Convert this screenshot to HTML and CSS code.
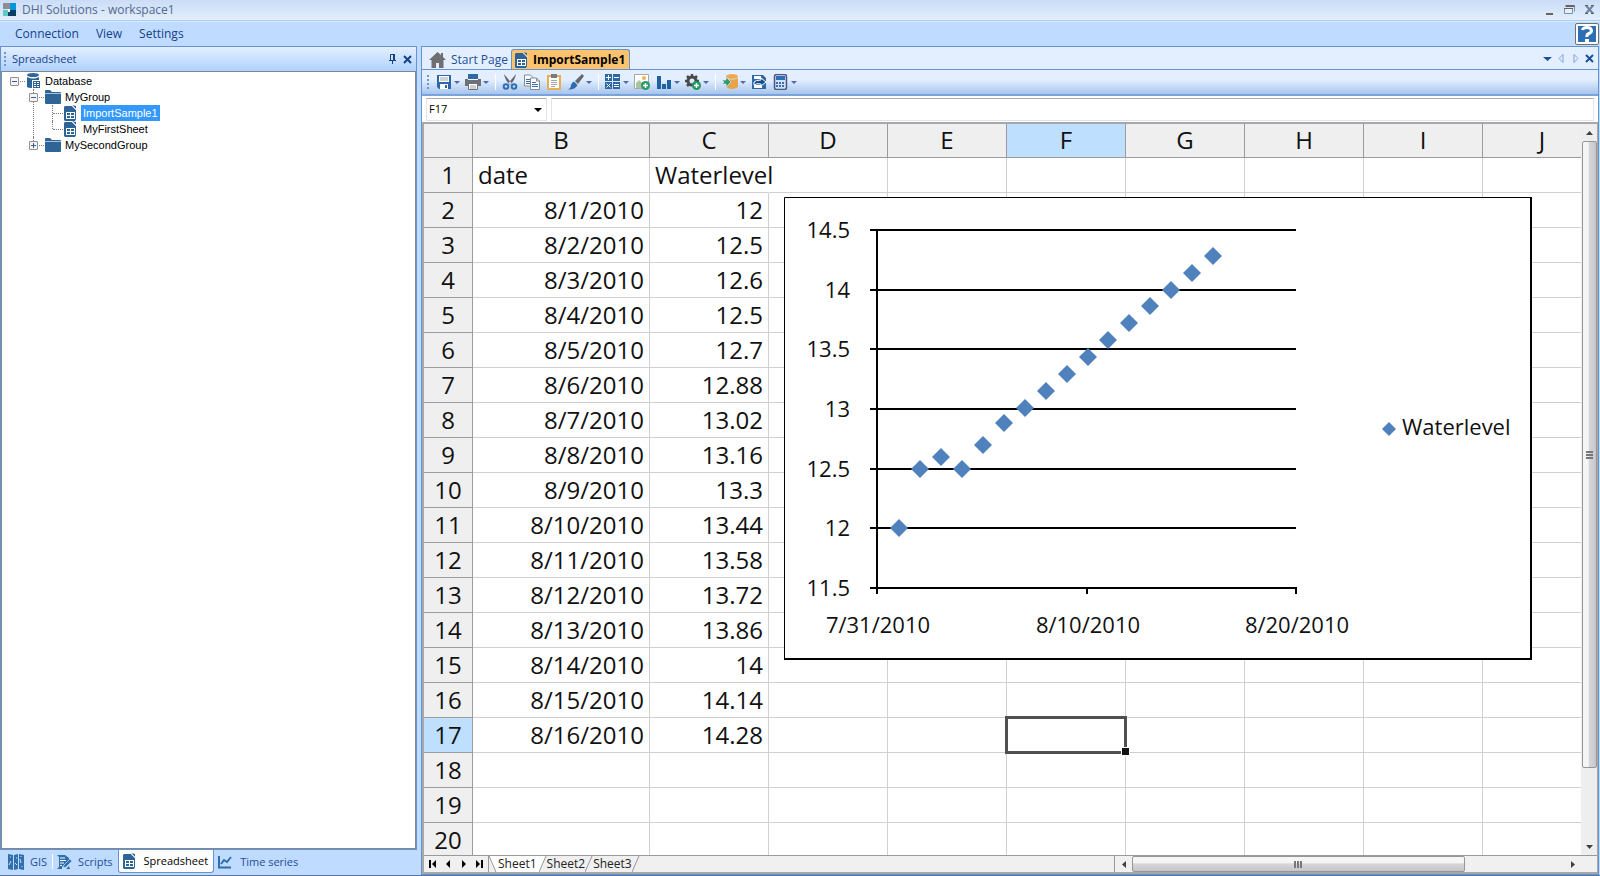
FILE: index.html
```html
<!DOCTYPE html>
<html lang="en">
<head>
<meta charset="utf-8">
<title>DHI Solutions - workspace1</title>
<link rel="stylesheet" href="styles.css">
</head>
<body>
<svg class="defs" aria-hidden="true">
  <symbol id="i-sheet" viewBox="0 0 14 16"><path d="M1 2l1-1h7l4 4v9l-1 2H2l-1-1z" fill="#2f6496"/><path d="M9 0l4 4V1z" fill="#2f6496"/><path d="M9 0v1l4 4h1z" fill="#fff"/><path d="M3 7h9v7H3z" fill="#fff"/><path d="M4 8h3v2H4zM8 8h3v2H8zM4 11h3v2H4zM8 11h3v2H8z" fill="#2f6496"/></symbol>
  <symbol id="i-folder" viewBox="0 0 16 14"><path d="M0 1q0-1 1-1h4l2 2h8q1 0 1 1v10q0 1-1 1H1q-1 0-1-1z" fill="#2f6496"/><path d="M0 3.500h16" stroke="#fff" stroke-opacity=".6"/></symbol>
</svg>
<div class="app">
  <header class="titlebar">
    <svg width="13" height="13" viewBox="0 0 13 13"><path d="M0 0h7v6H0z" fill="#8b8f92"/><path d="M7 0h6v7H7z" fill="#0098db"/><path d="M0 7h7v6H0z" fill="#61c9c3"/><path d="M5 7h8v6H5z" fill="#0b3f66"/><path d="M5 6h2v3H5z" fill="#fff"/></svg>
    <h1>DHI Solutions - workspace1</h1>
    <div class="window-buttons">
      <button aria-label="Minimize"><svg width="11" height="11"><path d="M2 9h7v2H2z" fill="#65635e"/></svg></button>
      <button aria-label="Restore"><svg width="11" height="11"><path d="M2 1.500h8.500v6" fill="none" stroke="#7791b9"/><path d="M1.500 2h9" stroke="#65635e" stroke-width="2"/><path d="M.5 4.500h8v5h-8z" fill="#e5effd" stroke="#7791b9"/><path d="M0 4.500h9" stroke="#65635e"/></svg></button>
      <button aria-label="Close"><svg width="11" height="11"><path d="M2 1.500l7 8M9 1.500l-7 8" stroke="#7080a0" stroke-width="2"/><path d="M1 1.500h3M7 1.500h3M1 9.500h3M7 9.500h3" stroke="#65635e"/></svg></button>
    </div>
  </header>
  <nav class="menubar">
    <a href="#">Connection</a><a href="#">View</a><a href="#">Settings</a>
    <button class="help" aria-label="Help"><svg width="18" height="16" viewBox="0 0 18 16"><path d="M0 0h18v16H0z" fill="#2e6fb3"/><path d="M4.500 4q.5-2.500 4.500-2.500T13.500 4.500Q13.500 6.500 11 7.500T9 11" fill="none" stroke="#fff" stroke-width="3"/><path d="M7 13h4v3H7z" fill="#fff"/></svg></button>
  </nav>
  <div class="body">
    <aside class="side">
      <section class="panel">
        <div class="panel-head">
          <span class="grip"></span>
          <h2>Spreadsheet</h2>
          <button aria-label="Pin"><svg width="9" height="10"><path d="M2.500 6V.5h3M6 0v6M1 6.500h7M4.500 6v4" fill="none" stroke="#15428b"/><path d="M5 0h2v6H5z" fill="#15428b"/></svg></button>
          <button aria-label="Close panel"><svg width="9" height="9"><path d="M1 1l7 7M8 1L1 8" stroke="#15428b" stroke-width="2"/></svg></button>
        </div>
        <div class="tree">
          <ul>
            <li>
              <div class="row"><button class="toggle open" aria-label="Collapse Database"></button><svg width="15" height="16" viewBox="0 0 15 16"><ellipse cx="7" cy="2" rx="6" ry="2" fill="#2f6496"/><path d="M1 4q6 3 12 0v3H6v8q-4 0-5-1z" fill="#2f6496"/><path d="M7 8h7v7H7z" fill="#2f6496"/><path d="M8 9h2v1H8zM11 9h2v1h-2zM8 11h2v1H8zM11 11h2v1h-2zM8 13h2v1H8zM11 13h2v1h-2z" fill="#fff"/></svg><span>Database</span></div>
              <ul>
                <li>
                  <div class="row"><button class="toggle open" aria-label="Collapse MyGroup"></button><svg width="16" height="14"><use href="#i-folder"/></svg><span>MyGroup</span></div>
                  <ul>
                    <li class="leaf"><div class="row"><svg width="14" height="16"><use href="#i-sheet"/></svg><span class="selected">ImportSample1</span></div></li>
                    <li class="leaf"><div class="row"><svg width="14" height="16"><use href="#i-sheet"/></svg><span>MyFirstSheet</span></div></li>
                  </ul>
                </li>
                <li><div class="row"><button class="toggle" aria-label="Expand MySecondGroup"></button><svg width="16" height="14"><use href="#i-folder"/></svg><span>MySecondGroup</span></div></li>
              </ul>
            </li>
          </ul>
        </div>
      </section>
      <nav class="side-tabs">
        <button><svg width="16" height="16" viewBox="0 0 16 16"><path d="M0 0l5 1v15l-5-1zM6 1l4-1v15l-4 1zM11 0l5 1v15l-5-1z" fill="#2f6fae"/><path d="M1 11l2-4M2 3h1M7 9l2 2M8 4h1M12 5l1 4M14 12v1M13 2v1" stroke="#fff" stroke-width=".8"/></svg>GIS</button>
        <i class="rule"></i>
        <button><svg width="16" height="16" viewBox="0 0 16 16"><path d="M1 1h8l4 3v2L6 13v2H1l2-2V3z" fill="#2f6fae"/><path d="M4 4h5M4 6.500h6M4 9h4M4 11.500h2" stroke="#fff"/><path d="M7 14l1-3 6-6 2 2-6 6z" fill="#2f6fae" stroke="#cfe2fb" stroke-width=".6"/><path d="M10 15h4l-1-3z" fill="#2f6fae"/></svg>Scripts</button>
        <button class="active"><svg width="14" height="16"><use href="#i-sheet"/></svg>Spreadsheet</button>
        <button><svg width="14" height="14" viewBox="0 0 14 14"><path d="M1 1v11.500h12" fill="none" stroke="#2f6fae" stroke-width="2"/><path d="M3 9l3-4 3 2 4-5" fill="none" stroke="#2f6fae" stroke-width="2"/></svg>Time series</button>
      </nav>
    </aside>
    <main class="doc">
      <div class="doc-tabs">
        <button><svg width="17" height="16" viewBox="0 0 17 16"><path d="M8.500 0L0 8h2.500v8H7v-5h3v5h4.500V8H17l-3-3V1h-2v2z" fill="#6e6f72"/></svg>Start Page</button>
        <button class="active"><svg width="14" height="16"><use href="#i-sheet"/></svg>ImportSample1</button>
        <div class="doc-nav">
          <button aria-label="Document list"><svg width="9" height="9"><path d="M0 3h9L4.500 7z" fill="#1b4f9c"/></svg></button>
          <button aria-label="Previous"><svg width="9" height="9"><path d="M6 .5v8L2 4.500z" fill="none" stroke="#7fa2d8"/></svg></button>
          <button aria-label="Next"><svg width="9" height="9"><path d="M3 .5v8L7 4.500z" fill="none" stroke="#7fa2d8"/></svg></button>
          <button aria-label="Close document"><svg width="9" height="9"><path d="M1 1l7 7M8 1L1 8" stroke="#1b4f9c" stroke-width="2"/></svg></button>
        </div>
      </div>
      <div class="toolbar">
        <span class="grip"></span>
        <button class="drop" aria-label="Save"><svg width="16" height="16" viewBox="0 0 16 16"><path d="M1 1h14v14H3l-2-2z" fill="#2f67a6"/><path d="M3 2h10v6H3zM4 10h8v5H4z" fill="#fff"/><path d="M4 4h8M4 6h8" stroke="#9aa7b8"/><path d="M9 11h2v3H9z" fill="#2f67a6"/></svg></button>
        <button class="drop" aria-label="Print"><svg width="16" height="16" viewBox="0 0 16 16"><path d="M3 0h10v5H3z" fill="#2f6aa8"/><path d="M0 5h16v7H0z" fill="#6d7074"/><path d="M3 5h10v1H3z" fill="#fff"/><path d="M3.500 9.500h9v6h-9z" fill="#fff" stroke="#6d7074"/><path d="M5 12h6M5 14h6" stroke="#9aa0a8"/></svg></button>
        <i class="rule"></i>
        <button aria-label="Cut"><svg width="16" height="16" viewBox="0 0 16 16"><path d="M2 0l7.500 9-2 1.500Q3 6 2 0zM14 0L6.500 9l2 1.500Q13 6 14 0z" fill="#64686d"/><circle cx="4" cy="12.500" r="2.300" fill="none" stroke="#2f70b4" stroke-width="2"/><circle cx="12" cy="12.500" r="2.300" fill="none" stroke="#2f70b4" stroke-width="2"/></svg></button>
        <button aria-label="Copy"><svg width="16" height="16" viewBox="0 0 16 16"><path d="M.5 1h6l3 3v8h-9z" fill="#fff" stroke="#86898e"/><path d="M2 5.500h4M2 7.500h4M2 9.500h4" stroke="#2f70b4"/><path d="M6.500 4h6l3 3v8.500h-9z" fill="#fff" stroke="#86898e"/><path d="M12.500 4v3h3" fill="none" stroke="#86898e"/><path d="M8 8.500h4M8 10.500h6M8 12.500h6" stroke="#2f70b4"/></svg></button>
        <button aria-label="Paste"><svg width="16" height="16" viewBox="0 0 16 16"><path d="M1 1h14v15H1z" fill="#e9ad56"/><path d="M3 3h10v11H3z" fill="#fff"/><path d="M5 0h6v4H5z" fill="#777a7e"/><path d="M5 6.500h6M5 8.500h6M5 10.500h6M5 12.500h4" stroke="#a4a7aa"/></svg></button>
        <button class="drop" aria-label="Format painter"><svg width="16" height="16" viewBox="0 0 16 16"><path d="M14 0l2 2-6 8-3-3z" fill="#65696e"/><path d="M6 7.500l3.500 3.500Q7 16 0 15.500 3 14 3 11q1-3 3-3.500z" fill="#2d6bb0"/></svg></button>
        <i class="rule"></i>
        <button class="drop" aria-label="Formula"><svg width="16" height="16" viewBox="0 0 16 16"><path d="M0 0h7v7H0zM8 0h7v7H8zM0 8h7v7H0zM8 8h7v7H8z" fill="#2c67a4"/><path d="M1 3.500h5M3.500 1v5M9 3.500h5M9 10.500h5M9 12.500h5M1.500 9.500l4 4M5.500 9.500l-4 4" stroke="#fff"/></svg></button>
        <button aria-label="Insert picture"><svg width="16" height="16" viewBox="0 0 16 16"><path d="M.5.500h14v14H.5z" fill="#fff" stroke="#a5a8aa"/><circle cx="10" cy="4" r="2" fill="#f1b25a"/><path d="M2 14V9l3-3 4 4v4z" fill="#a8c59c"/><circle cx="11.500" cy="11.500" r="4.500" fill="#299a63"/><path d="M9 11.500h5M11.500 9v5" stroke="#fff" stroke-width="1.500"/></svg></button>
        <button class="drop" aria-label="Insert chart"><svg width="16" height="16" viewBox="0 0 16 16"><path d="M1 2h4v13H1zM6 10h4v5H6zM11 6h4v9h-4z" fill="#1f61a5"/></svg></button>
        <button class="drop" aria-label="Add tool"><svg width="16" height="16" viewBox="0 0 16 16"><circle cx="7" cy="7" r="4" fill="none" stroke="#48494b" stroke-width="3"/><path d="M7 0v3M0 7h3M11 7h3M2 2l2 2M12 2l-2 2M2 12l2-2" stroke="#48494b" stroke-width="2.500"/><circle cx="11.500" cy="11.500" r="4.500" fill="#1f9a5c"/><path d="M9 11.500h5M11.500 9v5" stroke="#fff" stroke-width="1.500"/></svg></button>
        <i class="rule"></i>
        <button class="drop" aria-label="Database import"><svg width="16" height="16" viewBox="0 0 16 16"><ellipse cx="10" cy="2.500" rx="6" ry="2.500" fill="#eda952"/><path d="M4 4q6 3 12 0v9q-6 4-12 0z" fill="#e7a34c"/><path d="M0 6h4V3l5 5-5 5v-3H0l2-2z" fill="#2f9b72" stroke="#dfeafc" stroke-width=".7"/></svg></button>
        <button aria-label="Export"><svg width="16" height="16" viewBox="0 0 16 16"><path d="M1 1h11l3 3v11H1z" fill="#2f67a6"/><path d="M3 2h7v3H3zM3 11h8v3H3z" fill="#fff"/><path d="M3 8q2-2 7-2V4l5 4-5 4v-2Q5 9 3 11z" fill="#174d8c" stroke="#fff"/></svg></button>
        <button class="drop" aria-label="Calculator"><svg width="16" height="16" viewBox="0 0 16 16"><rect x="1.500" y=".5" width="12" height="15" rx="2" fill="#cfe0f8" stroke="#4c5482" stroke-width="1.500"/><path d="M3 2h9v4H3z" fill="#2e6fb3"/><path d="M3 8h2v2H3zM6 8h2v2H6zM9 8h2v2H9zM3 11h2v2H3zM6 11h2v2H6zM9 11h2v2H9z" fill="#3c70b0"/></svg></button>
      </div>
      <div class="formula">
        <div class="namebox"><select aria-label="Name box"><option>F17</option></select></div>
        <input type="text" aria-label="Formula">
      </div>
      <div class="sheet">
        <div class="grid">
          <table>
            <colgroup><col class="c-num"><col class="c-date"><col span="8" class="c-std"></colgroup>
            <thead><tr><th></th><th>B</th><th>C</th><th>D</th><th>E</th><th class="on">F</th><th>G</th><th>H</th><th>I</th><th>J</th></tr></thead>
            <tbody>
            <tr class="text"><th>1</th><td>date</td><td class="spill">Waterlevel</td><td></td><td></td><td></td><td></td><td></td><td></td><td></td></tr>
            <tr><th>2</th><td>8/1/2010</td><td>12</td><td></td><td></td><td></td><td></td><td></td><td></td><td></td></tr>
            <tr><th>3</th><td>8/2/2010</td><td>12.5</td><td></td><td></td><td></td><td></td><td></td><td></td><td></td></tr>
            <tr><th>4</th><td>8/3/2010</td><td>12.6</td><td></td><td></td><td></td><td></td><td></td><td></td><td></td></tr>
            <tr><th>5</th><td>8/4/2010</td><td>12.5</td><td></td><td></td><td></td><td></td><td></td><td></td><td></td></tr>
            <tr><th>6</th><td>8/5/2010</td><td>12.7</td><td></td><td></td><td></td><td></td><td></td><td></td><td></td></tr>
            <tr><th>7</th><td>8/6/2010</td><td>12.88</td><td></td><td></td><td></td><td></td><td></td><td></td><td></td></tr>
            <tr><th>8</th><td>8/7/2010</td><td>13.02</td><td></td><td></td><td></td><td></td><td></td><td></td><td></td></tr>
            <tr><th>9</th><td>8/8/2010</td><td>13.16</td><td></td><td></td><td></td><td></td><td></td><td></td><td></td></tr>
            <tr><th>10</th><td>8/9/2010</td><td>13.3</td><td></td><td></td><td></td><td></td><td></td><td></td><td></td></tr>
            <tr><th>11</th><td>8/10/2010</td><td>13.44</td><td></td><td></td><td></td><td></td><td></td><td></td><td></td></tr>
            <tr><th>12</th><td>8/11/2010</td><td>13.58</td><td></td><td></td><td></td><td></td><td></td><td></td><td></td></tr>
            <tr><th>13</th><td>8/12/2010</td><td>13.72</td><td></td><td></td><td></td><td></td><td></td><td></td><td></td></tr>
            <tr><th>14</th><td>8/13/2010</td><td>13.86</td><td></td><td></td><td></td><td></td><td></td><td></td><td></td></tr>
            <tr><th>15</th><td>8/14/2010</td><td>14</td><td></td><td></td><td></td><td></td><td></td><td></td><td></td></tr>
            <tr><th>16</th><td>8/15/2010</td><td>14.14</td><td></td><td></td><td></td><td></td><td></td><td></td><td></td></tr>
            <tr><th class="on">17</th><td>8/16/2010</td><td>14.28</td><td></td><td></td><td class="current"></td><td></td><td></td><td></td><td></td></tr>
            <tr><th>18</th><td></td><td></td><td></td><td></td><td></td><td></td><td></td><td></td><td></td></tr>
            <tr><th>19</th><td></td><td></td><td></td><td></td><td></td><td></td><td></td><td></td><td></td></tr>
            <tr><th>20</th><td></td><td></td><td></td><td></td><td></td><td></td><td></td><td></td><td></td></tr>
            </tbody>
          </table>
          <svg class="chart" width="748" height="463" viewBox="784 197 748 463" role="img" aria-label="Waterlevel chart">
            <defs><path id="pt" d="M0-9L9 0 0 9-9 0z" fill="#4f81bd"/></defs>
            <path d="M784 197h748v463H784z" fill="#fff"/>
            <path d="M784.500 660V197.500H1532" fill="none" stroke="#000"/><path d="M1531 197v462H784" fill="none" stroke="#000" stroke-width="2"/>
            <path d="M870 230h426M870 290h426M870 349h426M870 409h426M870 469h426M870 528h426M870 588h427M877 229v365M1087 588v6M1296 588v6" stroke="#000" stroke-width="2"/>
            <g class="ticks-y"><text x="850" y="238">14.5</text><text x="850" y="298">14</text><text x="850" y="357">13.5</text><text x="850" y="417">13</text><text x="850" y="477">12.5</text><text x="850" y="536">12</text><text x="850" y="596">11.5</text></g>
            <g class="ticks-x"><text x="878" y="633">7/31/2010</text><text x="1088" y="633">8/10/2010</text><text x="1297" y="633">8/20/2010</text></g>
            <use href="#pt" x="899" y="528"/><use href="#pt" x="920" y="469"/><use href="#pt" x="941" y="457"/><use href="#pt" x="962" y="469"/><use href="#pt" x="983" y="445"/><use href="#pt" x="1004" y="423"/><use href="#pt" x="1025" y="408"/><use href="#pt" x="1046" y="391"/><use href="#pt" x="1067" y="374"/><use href="#pt" x="1088" y="357"/><use href="#pt" x="1108" y="340"/><use href="#pt" x="1129" y="323"/><use href="#pt" x="1150" y="306"/><use href="#pt" x="1171" y="290"/><use href="#pt" x="1192" y="273"/><use href="#pt" x="1213" y="256"/>
            <path d="M1389 422l7 7-7 7-7-7z" fill="#4f81bd"/><text x="1402" y="435">Waterlevel</text>
          </svg>
        </div>
        <div class="vscroll"><button aria-label="Scroll up"><svg width="7" height="4"><path d="M0 4h7L3.500 0z" fill="#404040"/></svg></button><div class="track"><div class="thumb"><i></i></div></div><button aria-label="Scroll down"><svg width="7" height="4"><path d="M0 0h7L3.500 4z" fill="#404040"/></svg></button></div>
        <div class="sheetbar">
          <div class="sheetnav">
            <button aria-label="First sheet"><svg width="8" height="8"><path d="M1 0h2v8H1zM8 0v8L4 4z"/></svg></button>
            <button aria-label="Previous sheet"><svg width="8" height="8"><path d="M6 0v8L2 4z"/></svg></button>
            <button aria-label="Next sheet"><svg width="8" height="8"><path d="M2 0v8l4-4z"/></svg></button>
            <button aria-label="Last sheet"><svg width="8" height="8"><path d="M5 0h2v8H5zM0 0v8l4-4z"/></svg></button>
          </div>
          <div class="sheets">
            <button class="active"><svg class="edge" viewBox="0 0 8 16" preserveAspectRatio="none"><path d="M0 0h8v16H7z" fill="#fff"/><path d="M0 0l7 16" stroke="#999" fill="none"/></svg>Sheet1</button><svg class="slant" width="8" height="16"><path d="M0 0h7L0 16z" fill="#fff"/><path d="M7 0L0 16" stroke="#999"/></svg><button>Sheet2</button><svg class="slant" width="8" height="16"><path d="M7 0L0 16" stroke="#999"/></svg><button>Sheet3</button><svg class="slant" width="8" height="16"><path d="M7 0L0 16" stroke="#999"/></svg>
          </div>
          <div class="hscroll"><button aria-label="Scroll left"><svg width="4" height="7"><path d="M4 0v7L0 3.500z" fill="#404040"/></svg></button><div class="track"><div class="thumb"><i></i></div></div><button aria-label="Scroll right"><svg width="4" height="7"><path d="M0 0v7l4-3.500z" fill="#404040"/></svg></button></div>
        </div>
      </div>
    </main>
  </div>
</div>
</body>
</html>
```
FILE: styles.css
```css
* { box-sizing: border-box; }
body { margin: 0; font: 12px/16px "Open Sans", "Noto Sans", sans-serif; color: #15428b; overflow: hidden; }
button { font: inherit; color: inherit; background: none; border: 0; padding: 0; margin: 0; display: flex; align-items: center; justify-content: center; }
h1, h2 { margin: 0; font-size: 12px; font-weight: 400; }
a { color: inherit; text-decoration: none; }
ul { list-style: none; margin: 0; padding: 0; }
svg { display: block; flex: none; }
.defs { position: absolute; width: 0; height: 0; }

.app { height: 100vh; display: flex; flex-direction: column; background: #bfdbff; border-bottom: 1px solid #56759f; }
.titlebar { height: 21px; flex: none; display: flex; align-items: center; gap: 6px; padding: 0 5px 1px 3px; background: linear-gradient(#cadcf6, #e3effd); border-bottom: 1px solid #a9cff7; color: #53688f; }
.titlebar h1 { flex: 1; }
.window-buttons { display: flex; gap: 9px; }
.menubar { height: 25px; flex: none; display: flex; align-items: center; gap: 17px; padding-left: 15px; border-top: 1px solid #dcebff; }
.help { margin-left: auto; margin-right: 1px; width: 24px; height: 22px; background: #fff; border: 1px solid #707070; border-radius: 2px; }

.body { flex: 1; min-height: 0; display: flex; gap: 4px; padding-right: 1px; }
.side { width: 417px; flex: none; display: flex; flex-direction: column; }
.panel { flex: 1; min-height: 0; display: flex; flex-direction: column; border: 1px solid #6593cf; }
.panel-head { height: 24px; flex: none; display: flex; align-items: center; gap: 6px; padding: 0 4px 0 3px; background: linear-gradient(#e3efff, #afd2ff); }
.panel-head h2 { flex: 1; font-size: 11px; }
.grip { width: 2px; height: 15px; background: repeating-linear-gradient(#6c98d6 0 2px, transparent 2px 4px); }
.tree { flex: 1; background: #fff; border: 1px solid #828790; color: #000; font: 11px/16px "Liberation Sans", Arial, sans-serif; padding: 1px 0 0 8px; }
.row { display: flex; align-items: center; height: 16px; }
.row svg { margin-left: 6px; }
.row span { margin-left: 2px; padding: 0 2px; }
.row .selected { background: #3399ff; color: #fff; }
.toggle { width: 9px; height: 9px; flex: none; border: 1px solid #919191; background: linear-gradient(#3d5d99, #3d5d99) center / 5px 1px no-repeat, #f4f4f4; border-radius: 1px; }
.toggle:not(.open) { background: linear-gradient(#3d5d99, #3d5d99) center / 5px 1px no-repeat, linear-gradient(#3d5d99, #3d5d99) center / 1px 5px no-repeat, #f4f4f4; }
.tree ul ul { margin-left: 19px; }
.tree li { position: relative; }
.tree .toggle + svg { margin-left: 7px; }
.tree .toggle::after { content: ""; position: absolute; left: 10px; top: 8px; width: 5px; border-top: 1px dotted #808080; }
.tree li li::before { content: ""; position: absolute; left: 4px; top: 0; height: 100%; border-left: 1px dotted #808080; z-index: 0; }
.tree li li:last-child::before { height: 8px; }
.tree .row { position: relative; }
.leaf .row { padding-left: 9px; }
.leaf .row span { margin-left: 4px; }
.leaf .row::before { content: ""; position: absolute; left: 5px; top: 8px; width: 10px; border-top: 1px dotted #808080; }
.side-tabs { height: 25px; flex: none; display: flex; align-items: flex-start; padding-left: 8px; font-size: 11px; }
.side-tabs button { height: 23px; gap: 6px; padding: 0 5px 0 3px; color: #1f4f9b; }
.side-tabs button:first-child { padding-left: 0; }
.side-tabs .rule { width: 1px; height: 15px; margin-top: 4px; background: #fff; }
.side-tabs .active { background: #fff; color: #000; border: 1px solid #6593cf; border-top: 0; border-radius: 0 0 3px 3px; gap: 8px; padding-left: 3px; }
.side-tabs .active + button { gap: 8px; padding-left: 4px; }

.doc { flex: 1; min-width: 0; display: flex; flex-direction: column; border: 1px solid #6593cf; }
.doc-tabs { height: 23px; flex: none; display: flex; align-items: flex-end; padding-left: 7px; background: #e3efff; border-bottom: 1px solid #6593cf; }
.doc-tabs > button { height: 20px; gap: 5px; padding: 2px 3px 0 0; color: #1f4f9b; }
.doc-tabs .active { color: #000; font-weight: 700; background: #fbc36e; border: 1px solid #6593cf; border-bottom: 0; border-radius: 3px 3px 0 0; padding: 1px 4px 0 2px; }
.doc-nav { margin-left: auto; display: flex; gap: 5px; padding: 1px 4px 0 0; align-self: center; }
.toolbar { height: 26px; flex: none; display: flex; align-items: center; padding-left: 5px; background: linear-gradient(#e3efff 40%, #a7c5ed); border-bottom: 2px solid #7ba3db; }
.toolbar .grip { margin-right: 4px; }
.toolbar button { width: 22px; height: 22px; }
.toolbar .drop { width: 29px; gap: 2px; }
.drop::after { content: ""; border: 3px solid transparent; border-top-color: #5568b0; border-bottom: 0; }
.toolbar .rule { width: 1px; height: 16px; margin: 0 3px 0 4px; background: #fff; }
.formula { height: 26px; flex: none; display: flex; gap: 4px; padding: 2px 4px 1px; background: #fff; }
.namebox { width: 121px; display: flex; position: relative; }
.namebox::after { content: ""; position: absolute; right: 5px; top: 10px; border: 4px solid transparent; border-top-color: #000; border-bottom: 0; pointer-events: none; }
.namebox select, .formula input { appearance: none; flex: 1; min-width: 0; font: 11px/16px "Open Sans", "Noto Sans", sans-serif; color: #000; background: #fff; border: 1px solid #e2e3ea; border-top-color: #abadb3; border-radius: 1px; padding: 0 2px 2px; }
.sheet { flex: 1; min-height: 0; display: grid; grid-template: minmax(0, 1fr) 17px / minmax(0, 1fr) 16px; border: 2px solid #a7a8ac; border-right-width: 1px; background: #f0f0f0; }
.grid { position: relative; overflow: hidden; background: #fff; }
table { table-layout: fixed; width: 1178px; border-collapse: separate; border-spacing: 0; font: 24px/30px "Open Sans", "Noto Sans", sans-serif; color: #111; }
.c-num { width: 49px; }
.c-date { width: 177px; }
.c-std { width: 119px; }
th, td { height: 35px; padding: 2px 5px; border: 0 solid #d0d0d0; border-width: 0 1px 1px 0; text-align: right; white-space: nowrap; }
.text td { text-align: left; }
th { font-weight: 400; text-align: center; background: #efefef; border-color: #9c9c9c; padding: 2px 0; }
thead th { height: 34px; padding: 1px 0 2px; }
th.on { background: #bfdfff; }
.spill { border-right-color: transparent; }
.current { position: relative; }
.current::before { content: ""; position: absolute; inset: -2px; border: 3px solid #505050; }
.current::after { content: ""; position: absolute; right: -5px; bottom: -4px; width: 7px; height: 7px; background: #111; border: 1px solid #fff; }
.chart { position: absolute; left: 360px; top: 73px; font: 22px "Open Sans", "Noto Sans", sans-serif; fill: #111; }
.ticks-y { text-anchor: end; }
.ticks-x { text-anchor: middle; }

.vscroll { display: flex; flex-direction: column; background: #eee; padding-left: 1px; }
.vscroll button, .hscroll button { width: 17px; height: 17px; flex: none; }
.vscroll button { width: auto; }
.track { flex: 1; display: flex; }
.vscroll .track { flex-direction: column; }
.thumb { display: flex; align-items: center; justify-content: center; border: 1px solid #979797; border-radius: 2px; }
.vscroll .thumb { height: 90%; background: linear-gradient(90deg, #f5f5f5 40%, #d6d6d8 50%, #c6c6cb); }
.vscroll .thumb i { width: 7px; height: 8px; background: repeating-linear-gradient(#777 0 2px, transparent 2px 3px); }
.sheetbar { grid-column: 1 / -1; display: flex; border-top: 1px solid #999; color: #222; font-size: 12px; }
.sheetnav { width: 65px; display: flex; justify-content: space-around; border-right: 1px solid #999; }
.sheets { flex: 1; display: flex; align-items: stretch; border-right: 1px solid #999; }
.sheets button { padding: 0; }
.sheets .active { background: #fff; gap: 1px; padding-right: 2px; }
.edge { width: 8px; height: 16px; background: #f0f0f0; }
.hscroll { width: 466px; display: flex; margin-right: 16px; }
.hscroll .thumb { width: 77%; background: linear-gradient(#f5f5f5 40%, #d6d6d8 50%, #c6c6cb); }
.hscroll .thumb i { width: 8px; height: 7px; background: repeating-linear-gradient(90deg, #777 0 2px, transparent 2px 3px); }
```
